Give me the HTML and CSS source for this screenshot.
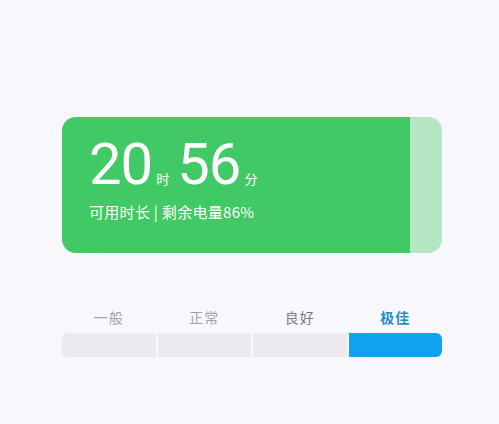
FILE: index.html
```html
<!DOCTYPE html>
<html lang="zh-CN">
<head>
  <meta charset="UTF-8">
  <meta name="viewport" content="width=device-width, initial-scale=1.0">
  <title>电池</title>
  <link rel="stylesheet" href="styles.css">
</head>
<body>

  <!-- Battery card -->
  <div class="card">
    <div class="card-main">
      <div class="time">
        <span class="num">20</span><span class="unit">时</span>
        <span class="num">56</span><span class="unit">分</span>
      </div>
      <p class="sub">可用时长 | 剩余电量86%</p>
    </div>
    <div class="card-rest"></div>
  </div>

  <!-- Level bar -->
  <div class="levels">
    <div class="level">
      <span class="label">一般</span>
      <div class="seg"></div>
    </div>
    <div class="level">
      <span class="label">正常</span>
      <div class="seg"></div>
    </div>
    <div class="level">
      <span class="label dark">良好</span>
      <div class="seg"></div>
    </div>
    <div class="level active">
      <span class="label">极佳</span>
      <div class="seg"></div>
    </div>
  </div>

</body>
</html>
```

FILE: styles.css
```css
* {
  margin: 0;
  padding: 0;
  box-sizing: border-box;
}
body {
  font-family: Roboto, "Noto Sans CJK SC", sans-serif;
  background-color: #f8f7fb;
  padding-top: 117px;
  padding-left: 62px;
}
.card {
  width: 380px;
  height: 136px;
  display: flex;
  border-radius: 14px;
  overflow: hidden;
}
.card-main {
  flex: 1;
  background-color: #40c965;
  color: white;
  padding: 18px 0 0 27px;
}
.card-rest {
  width: 32px;
  background-color: #b5e6c4;
}
.time {
  display: flex;
  align-items: baseline;
  line-height: 1;
}
.num {
  font-size: 58px;
  font-weight: 400;
  letter-spacing: -1px;
}
.unit {
  font-size: 13px;
  margin: 0 8px 0 4px;
}
.sub {
  font-size: 15px;
  letter-spacing: 0.3px;
  margin-top: 8px;
  font-family: "Noto Sans CJK SC", sans-serif;
}
.levels {
  width: 380px;
  margin-top: 53px;
  display: flex;
  gap: 2px;
}
.level {
  flex: 1;
  display: flex;
  flex-direction: column;
  align-items: center;
}
.label {
  font-family: "Noto Sans CJK SC", sans-serif;
  font-size: 14px;
  letter-spacing: 1px;
  color: #a3a3a6;
  height: 22px;
  line-height: 22px;
  margin-bottom: 5px;
}
.label.dark {
  color: #7b7b7e;
}
.seg {
  width: 100%;
  height: 24px;
  background-color: #ebeaee;
}
.level:first-child .seg {
  border-radius: 5px 0 0 5px;
}
.level.active .seg {
  background-color: #12a1f1;
  border-radius: 0 6px 6px 0;
}
.level.active .label {
  color: #2b8dc6;
  font-weight: 700;
}
```
